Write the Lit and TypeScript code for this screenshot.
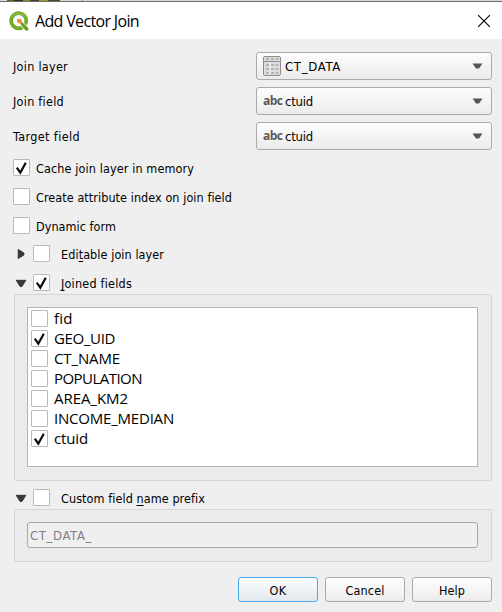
import { LitElement, html, css, svg } from "lit";
import { customElement, property } from "lit/decorators.js";

/** A single line of text tracked so that it spans a given width. */
@customElement("text-run")
class TextRun extends LitElement {
  @property() text = "";
  @property() accel = "";
  @property({ type: Number }) span = 0;

  static styles = css`
    :host { display: inline-block; white-space: pre; }
    .accel { text-decoration: underline; text-underline-offset: 2px; text-decoration-thickness: 1px; text-decoration-skip-ink: none; }
  `;

  render() {
    const i = this.accel ? this.text.indexOf(this.accel) : -1;
    return i < 0
      ? html`<span class="run">${this.text}</span>`
      : html`<span class="run">${this.text.slice(0, i)}<span class="accel">${this.accel}</span>${this.text.slice(i + this.accel.length)}</span>`;
  }

  updated() {
    const run = this.renderRoot.querySelector(".run") as HTMLElement;
    run.style.letterSpacing = "0px";
    const natural = run.getBoundingClientRect().width;
    if (this.span && natural) run.style.letterSpacing = `${(this.span - natural) / this.text.length}px`;
  }
}

@customElement("check-box")
class CheckBox extends LitElement {
  @property({ type: Boolean }) checked = false;

  static styles = css`
    :host { display: block; flex: none; box-sizing: border-box; width: 17px; height: 17px; border: 1px solid #bababa; border-radius: 1px; background: #fff; }
    svg { display: block; }
  `;

  render() {
    return this.checked
      ? html`<svg width="15" height="15" viewBox="0 0 15 15"><path d="M2.8 7.6 6.3 12.6 11.8 2.8" fill="none" stroke="#0c0c0c" stroke-width="2.2"/></svg>`
      : html``;
  }
}

@customElement("app-root")
class AppRoot extends LitElement {
  static styles = css`
    :host { display: block; width: 502px; height: 612px; overflow: hidden; background: #efefef; color: #000;
      font: 12.5px/17px "DejaVu Sans Condensed", "DejaVu Sans", sans-serif; font-stretch: condensed; }
    * { box-sizing: border-box; }
    svg { display: block; flex: none; }
    .behind { height: 2px; border-bottom: 1px solid #6c6c6c; background: linear-gradient(90deg, #d9d9d9 7px, #5d6417 7px 14px, #302c1f 14px 23px, #8b9422 23px 30px, #3b3b39 30px 39px, #a99a28 39px 48px, #4d4727 48px 60px, #d9d9d9 60px 82px, #999 82px 83px, #d9d9d9 83px); }
    .title { height: 37px; background: #fff; display: flex; align-items: center; padding: 0 12px 0 9px; font: 16px/22px "Open Sans", sans-serif; }
    .title text-run { margin: 0 auto 0 6px; }
    .body { padding: 13px 10px 0 13px; }
    .pick { display: flex; align-items: center; justify-content: space-between; height: 28px; margin-bottom: 7px; }
    .combo { width: 236px; height: 28px; border: 1px solid #aaa; border-radius: 3px; background: linear-gradient(#fdfdfd, #ebebeb); display: flex; align-items: center; padding: 0 8px 0 6px; font-size: 13px; }
    .icon { width: 22px; flex: none; }
    .value { padding-top: 1px; }
    .abc { font: bold 12px/14px "Open Sans", sans-serif; color: #5a5a5a; display: block; margin-top: -1px; }
    .combo > svg { margin-left: auto; }
    .check { display: flex; align-items: center; height: 17px; gap: 6px; margin-bottom: 12px; }
    .check text-run { padding-top: 1px; }
    .checks { padding-top: 2px; margin-bottom: -1px; }
    .fold { display: flex; align-items: center; height: 17px; }
    .fold svg { margin-left: 2px; margin-right: 6px; }
    .fold text-run { margin-left: 11px; padding-top: 1px; }
    .editable { margin-bottom: 12px; }
    .panel { margin: 3px 0 0 1px; border: 1px solid #d6d6d6; border-radius: 2px; background: #ebebeb; padding: 12px 13px 0 12px; }
    .fields { height: 187px; margin-bottom: 8px; }
    .prefix { height: 53px; }
    .list { height: 160px; border: 1px solid #b5b5b5; background: #fff; padding: 2px 3px; font: 15px/17px "Open Sans", sans-serif; }
    .item { display: flex; gap: 6px; height: 20px; }
    .item text-run { line-height: 17px; }
    .input { height: 26px; border: 1px solid #a8a8a8; border-radius: 3px; background: #efefef; color: #7f7f7f; padding: 1px 2px 0; display: flex; align-items: center; font-size: 13px; }
    .buttons { display: flex; justify-content: flex-end; gap: 7px; margin-top: 15px; }
    .button { width: 80px; height: 25px; border: 1px solid #aaa; border-radius: 3px; background: linear-gradient(#fefefe, #ececec); display: flex; align-items: center; justify-content: center; padding-top: 2px; }
    .default { border-color: #4ba9f0; background: linear-gradient(#fdfefe, #e1e8ee); }
  `;

  private logo = svg`<svg width="20" height="20" viewBox="0 0 20 20">
    <circle cx="9.7" cy="9.7" r="7.6" fill="none" stroke="#76aa2b" stroke-width="3.8"/>
    <path d="M3 6A8 8 0 0 1 16 6" fill="none" stroke="#8bb83b" stroke-width="1.6"/>
    <path d="M10 13 13 10 19.5 16.3V19.5H16Z" fill="#fff"/>
    <path d="M11 12.5 13 11 19.3 17V19.4H16.5Z" fill="#6a9d29"/>
    <path d="M8 8h3.8l1.7 2.8-2.5 2L8 11.3Z" fill="#ee8c3c"/>
  </svg>`;

  private table = svg`<svg width="18" height="20" viewBox="0 0 18 20">
    <rect x=".5" y=".5" width="17" height="19" rx="1.5" fill="#dedede" stroke="#8b8b8b"/>
    <path d="M1 5.5H17" stroke="#8b8b8b"/>
    <path d="M3 3H6M8 3H11M12.5 3H15.5M3 9H6M8 9H11M12.5 9H15.5M3 13H6M8 13H11M12.5 13H15.5M3 17H6M8 17H11M12.5 17H15.5" stroke="#888" stroke-width="1.2"/>
    <path d="M7 6V19" stroke="#f5f5f5"/>
  </svg>`;

  private combo(text: string, span: number, table = false) {
    return html`<div class="combo">
      <span class="icon">${table ? this.table : html`<text-run class="abc" text="abc" .span=${19.5}></text-run>`}</span>
      <text-run class="value" .text=${text} .span=${span}></text-run>
      <svg width="11" height="6" viewBox="0 0 11 6"><path d="M.5.5H10.5L7 5.5H4Z" fill="#555"/></svg>
    </div>`;
  }

  private pick(label: string, width: number, combo: unknown) {
    return html`<div class="pick"><text-run .text=${label} .span=${width}></text-run>${combo}</div>`;
  }

  private fold(text: string, accel: string, span: number, open: boolean, checked: boolean, extra = "") {
    return html`<div class="fold ${extra}">
      <svg width="12" height="12" viewBox="0 0 12 12">${open
        ? svg`<path d="M1.2 3.3H10.8L7 9.4H5Z" fill="#3b3b3b" stroke="#222" stroke-width=".8"/>`
        : svg`<path d="M3.2 1.4V10.6L8.9 7V5Z" fill="#3b3b3b" stroke="#222" stroke-width=".8"/>`}</svg>
      <check-box ?checked=${checked}></check-box>
      <text-run .text=${text} .accel=${accel} .span=${span}></text-run>
    </div>`;
  }

  render() {
    const options: [string, number, boolean][] = [
      ["Cache join layer in memory", 158, true],
      ["Create attribute index on join field", 196, false],
      ["Dynamic form", 80, false],
    ];
    const fields: [string, number, boolean][] = [
      ["fid", 18.5, false], ["GEO_UID", 61, true], ["CT_NAME", 66, false], ["POPULATION", 88, false],
      ["AREA_KM2", 74, false], ["INCOME_MEDIAN", 120, false], ["ctuid", 34, true],
    ];
    return html`
      <div class="behind"></div>
      <div class="title">
        ${this.logo}
        <text-run text="Add Vector Join" .span=${104}></text-run>
        <svg width="12" height="12" viewBox="0 0 12 12"><path d="M0 0 12 12M12 0 0 12" stroke="#000" stroke-width="1.1"/></svg>
      </div>
      <div class="body">
        ${this.pick("Join layer", 55, this.combo("CT_DATA", 56, true))}
        ${this.pick("Join field", 51, this.combo("ctuid", 28))}
        ${this.pick("Target field", 67, this.combo("ctuid", 28))}
        <div class="checks">
          ${options.map(([t, w, c]) => html`<div class="check"><check-box ?checked=${c}></check-box><text-run .text=${t} .span=${w}></text-run></div>`)}
        </div>
        ${this.fold("Editable join layer", "t", 103, false, false, "editable")}
        ${this.fold("Joined fields", "J", 71, true, true)}
        <div class="panel fields"><div class="list">
          ${fields.map(([t, w, c]) => html`<div class="item"><check-box ?checked=${c}></check-box><text-run .text=${t} .span=${w}></text-run></div>`)}
        </div></div>
        ${this.fold("Custom field name prefix", "n", 144, true, false)}
        <div class="panel prefix"><div class="input"><text-run text="CT_DATA_" .span=${62}></text-run></div></div>
        <div class="buttons">
          <div class="button default"><text-run text="OK" .span=${17}></text-run></div>
          <div class="button"><text-run text="Cancel" .span=${39}></text-run></div>
          <div class="button"><text-run text="Help" .span=${26}></text-run></div>
        </div>
      </div>`;
  }
}
